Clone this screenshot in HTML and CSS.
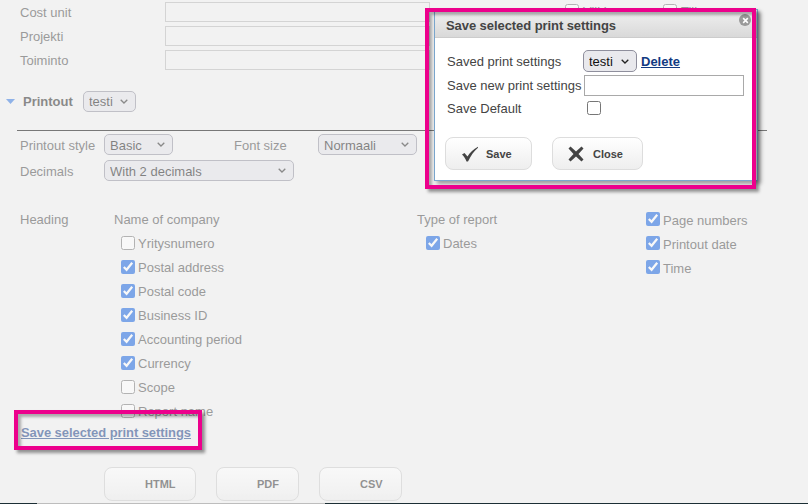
FILE: index.html
```html
<!DOCTYPE html>
<html lang="en">
<head>
<meta charset="utf-8">
<title>Save selected print settings</title>
<link rel="stylesheet" href="styles.css">
</head>
<body>
<div class="viewport">
  <main class="page">
    <section class="filters">
      <div class="filter-row">
        <label class="filter-label">Cost unit</label>
        <input class="text-input" type="text">
        <label class="top-check top-check-a"><input type="checkbox"><span>Viikko</span></label>
        <label class="top-check"><input type="checkbox"><span>Tili</span></label>
      </div>
      <div class="filter-row">
        <label class="filter-label">Projekti</label>
        <input class="text-input" type="text">
      </div>
      <div class="filter-row">
        <label class="filter-label">Toiminto</label>
        <input class="text-input" type="text">
      </div>
    </section>

    <section class="printout-head">
      <svg class="caret" width="9" height="5" viewBox="0 0 9 5"><path d="M0 0h9L4.500 5z"/></svg>
      <strong class="printout-title">Printout</strong>
      <select class="sel sel-head"><option>testi</option></select>
    </section>

    <hr class="rule">

    <section class="style-rows">
      <div class="style-row">
        <span class="style-label">Printout style</span>
        <select class="sel sel-basic"><option>Basic</option></select>
        <span class="font-label">Font size</span>
        <select class="sel sel-font"><option>Normaali</option></select>
      </div>
      <div class="style-row">
        <span class="style-label">Decimals</span>
        <select class="sel sel-dec"><option>With 2 decimals</option></select>
      </div>
    </section>

    <section class="heading-grid">
      <div class="col-label">Heading</div>
      <div class="col-company">
        <div class="col-title">Name of company</div>
        <label class="check"><input type="checkbox"><span>Yritysnumero</span></label>
        <label class="check"><input type="checkbox" checked><span>Postal address</span></label>
        <label class="check"><input type="checkbox" checked><span>Postal code</span></label>
        <label class="check"><input type="checkbox" checked><span>Business ID</span></label>
        <label class="check"><input type="checkbox" checked><span>Accounting period</span></label>
        <label class="check"><input type="checkbox" checked><span>Currency</span></label>
        <label class="check"><input type="checkbox"><span>Scope</span></label>
        <label class="check"><input type="checkbox"><span>Report name</span></label>
      </div>
      <div class="col-type">
        <div class="col-title">Type of report</div>
        <label class="check"><input type="checkbox" checked><span>Dates</span></label>
      </div>
      <div class="col-page">
        <label class="check check-flush"><input type="checkbox" checked><span>Page numbers</span></label>
        <label class="check check-flush"><input type="checkbox" checked><span>Printout date</span></label>
        <label class="check check-flush"><input type="checkbox" checked><span>Time</span></label>
      </div>
    </section>

    <a class="save-link" href="#">Save selected print settings</a>

    <section class="export-row">
      <button class="export-btn export-html" type="button">HTML</button>
      <button class="export-btn export-pdf" type="button">PDF</button>
      <button class="export-btn export-csv" type="button">CSV</button>
    </section>
  </main>

  <div class="taskbar">
    <span class="task-dark task-left"></span>
    <span class="task-grey"></span>
    <span class="task-dark"></span>
  </div>

  <div class="mark mark-link"></div>

  <div class="dialog">
    <header class="dialog-title">
      <span>Save selected print settings</span>
      <span class="dialog-x">
        <svg width="9" height="9" viewBox="0 0 9 9"><path d="M1.500 1.500l6 6M7.500 1.500l-6 6"/></svg>
      </span>
    </header>
    <div class="dialog-body">
      <div class="dlg-row dlg-row-saved">
        <span class="dlg-label">Saved print settings</span>
        <select class="dlg-select"><option>testi</option></select>
        <a class="dlg-delete" href="#">Delete</a>
      </div>
      <div class="dlg-row dlg-row-new">
        <span class="dlg-label dlg-label-new">Save new print settings</span>
        <input class="dlg-input" type="text">
      </div>
      <div class="dlg-row dlg-row-default">
        <span class="dlg-label">Save Default</span>
        <input class="dlg-check" type="checkbox">
      </div>
      <div class="dlg-actions">
        <button class="dlg-btn dlg-save" type="button">
          <svg width="18" height="16" viewBox="0 0 18 16"><path d="M1 8.500l2.500-1.500 3 3.500C9 6.500 12.500 3 17 .8v1C13 5 10 9.500 7 15.500H5.500C4.500 12.500 3 10.500 1 8.500z"/></svg>
          <span>Save</span>
        </button>
        <button class="dlg-btn dlg-close" type="button">
          <svg width="16" height="16" viewBox="0 0 16 16"><path d="M2.500.5L8 5.500 13.500.5l2 2L10.500 8l5 5.500-2 2L8 10.500l-5.500 5-2-2L5.500 8 .5 2.500z"/></svg>
          <span>Close</span>
        </button>
      </div>
    </div>
  </div>
  <div class="mark mark-dialog"></div>
</div>
</body>
</html>
```
FILE: styles.css
```css
* { box-sizing: border-box; }
html, body { margin: 0; padding: 0; }
body {
  background: #f2f2f2;
  font-family: "Liberation Sans", Arial, sans-serif;
  font-size: 13px;
  color: #444;
}
.viewport {
  position: relative;
  width: 808px;
  height: 504px;
  overflow: hidden;
  display: flex;
  flex-direction: column;
}
.page {
  flex: 1;
  min-height: 0;
  overflow: hidden;
  opacity: .5;
  padding: 2px 0 0 20px;
}

/* top filters */
.filters { display: flex; flex-direction: column; gap: 4px; }
.filter-row { display: flex; align-items: center; height: 20px; }
.filter-label { width: 145px; flex: none; }
.text-input {
  width: 265px;
  height: 20px;
  flex: none;
  border: 1px solid #b8b8b8;
  background: #f2f2f2;
  margin: 0;
}
.top-check {
  display: flex;
  align-items: flex-start;
  gap: 4px;
  flex: none;
  width: 98px;
  height: 5px;
  overflow: hidden;
  align-self: flex-start;
  margin-top: 2px;
}
.top-check-a { margin-left: 135px; }
.top-check input { margin: 0; width: 14px; height: 14px; flex: none; }

/* printout head */
.printout-head {
  display: flex;
  align-items: center;
  height: 22px;
  margin: 20px 0 0 -14px;
}
.caret { flex: none; margin-right: 8px; }
.caret path { fill: #2f74e0; }
.printout-title { width: 60px; flex: none; color: #222; }

.sel, .dlg-select {
  appearance: none;
  margin: 0;
  padding: 1px 0 0 5px;
  font: 13px "Liberation Sans", Arial, sans-serif;
  flex: none;
  background: #e4e4ea url("data:image/svg+xml,%3Csvg xmlns='http://www.w3.org/2000/svg' width='8' height='5'%3E%3Cpath d='M.7.7l3.300 3.300L7.300.7' fill='none' stroke='%23222' stroke-width='1.300'/%3E%3C/svg%3E") no-repeat right 7px center;
  border: 1px solid #8f8f9d;
  border-radius: 5px;
}
.sel { height: 21px; color: #111; }
.sel-head { width: 53px; }
.sel-basic { width: 69px; }
.sel-font { width: 99px; }
.sel-dec { width: 190px; }

.rule {
  margin: 18px 41px 0 -3px;
  border: 0;
  border-top: 1px solid #000;
  height: 0;
}

.style-rows { display: flex; flex-direction: column; gap: 5px; margin-top: 3px; }
.style-row { display: flex; align-items: center; height: 21px; }
.style-label { width: 84px; flex: none; padding-top: 1px; }
.font-label { width: 84px; flex: none; margin-left: 61px; padding-top: 1px; }

/* heading */
.heading-grid {
  display: grid;
  grid-template-columns: 94px 303px 229px 1fr;
  margin-top: 27px;
}
.col-title { height: 24px; line-height: 24px; }
.check { display: flex; align-items: center; height: 24px; padding-left: 7px; gap: 3px; }
.check input { margin: 0 0 2px; width: 14px; height: 14px; flex: none; accent-color: #0a5ce0; }
.check span { position: relative; top: -1px; }
.check-flush { padding-left: 0; }
.check-flush span { top: 0; }
.col-label { line-height: 24px; }
.col-company { height: 208px; }
.col-type .check { padding-left: 9px; }

/* link */
.save-link {
  display: block;
  margin: 9px 0 0 1px;
  font-weight: bold;
  color: #123a82;
  line-height: 16px;
  letter-spacing: -.07px;
  width: max-content;
}

/* export */
.export-row { display: flex; gap: 20px; margin: 26px 0 0 84px; }
.export-btn {
  height: 34px;
  border: 1px solid #ccc;
  border-radius: 8px;
  background: linear-gradient(#fff, #eee);
  font: bold 11px "Liberation Sans", Arial, sans-serif;
  color: #333;
  text-align: left;
  margin: 0;
}
.export-html { width: 92px; padding-left: 40px; }
.export-pdf { width: 83px; padding-left: 40px; }
.export-csv { width: 83px; padding-left: 40px; }

/* taskbar sliver */
.taskbar { flex: none; height: 1px; display: flex; }
.task-dark { flex: 1; background: #1c2f35; }
.task-left { flex: none; width: 37px; }
.task-grey { flex: none; width: 288px; background: #bdbdbd; }

/* annotation boxes */
.mark {
  position: absolute;
  border: 4px solid #ec008c;
  box-shadow: 3px 3px 3px rgba(0,0,0,.4), inset 3px 3px 3px rgba(0,0,0,.3);
  pointer-events: none;
}
.mark-link { left: 14px; top: 410px; width: 188px; height: 40px; }
.mark-dialog { left: 425px; top: 8px; width: 331px; height: 181px; }

/* dialog */
.dialog {
  position: absolute;
  left: 434px;
  top: 9px;
  width: 324px;
  height: 172px;
  background: #fff;
  border: 1px solid #7ba7cf;
  box-shadow: 3px 3px 4px rgba(0,0,0,.35);
  display: flex;
  flex-direction: column;
}
.dialog-title {
  flex: none;
  height: 28px;
  display: flex;
  align-items: center;
  justify-content: space-between;
  padding: 3px 5px 0 11px;
  background: linear-gradient(#f0f0f0, #d9d9d9);
  border-bottom: 1px solid #ccc;
  font-weight: bold;
  font-size: 13px;
  letter-spacing: -.07px;
  color: #444;
}
.dialog-x {
  position: absolute;
  right: 6px;
  top: 4px;
  width: 12px;
  height: 12px;
  border-radius: 50%;
  background: #9a9a9a;
  display: flex;
  align-items: center;
  justify-content: center;
}
.dialog-x svg { width: 7px; height: 7px; }
.dialog-x path { stroke: #fff; stroke-width: 2; fill: none; }
.dialog-body { flex: 1; padding: 12px 0 0 12px; }
.dlg-row { display: flex; align-items: center; }
.dlg-row-saved { height: 22px; }
.dlg-row-new { height: 22px; margin-top: 2px; }
.dlg-row-default { height: 14px; margin-top: 5px; }
.dlg-label { width: 136px; flex: none; white-space: nowrap; color: #444; }
.dlg-label-new { width: 137px; }
.dlg-select {
  width: 54px;
  height: 22px;
  color: #111;
  background-color: #e9e9ed;
}
.dlg-delete { margin-left: 4px; font-weight: bold; color: #123a82; }
.dlg-input { width: 160px; height: 21px; margin: 0; border: 1px solid #a9a9a9; flex: none; }
.dlg-check { width: 14px; height: 14px; margin: 0 0 0 4px; flex: none; }
.dlg-actions { display: flex; gap: 20px; margin: 22px 0 0 -2px; }
.dlg-btn {
  height: 33px;
  display: flex;
  align-items: center;
  border: 1px solid #ddd;
  border-radius: 8px;
  background: linear-gradient(#fff, #eee);
  font: bold 11px "Liberation Sans", Arial, sans-serif;
  color: #444;
  margin: 0;
  padding: 0;
}
.dlg-btn svg path { fill: #444; }
.dlg-save { width: 87px; padding-left: 15px; gap: 7px; }
.dlg-close { width: 91px; padding-left: 15px; gap: 9px; }
```
